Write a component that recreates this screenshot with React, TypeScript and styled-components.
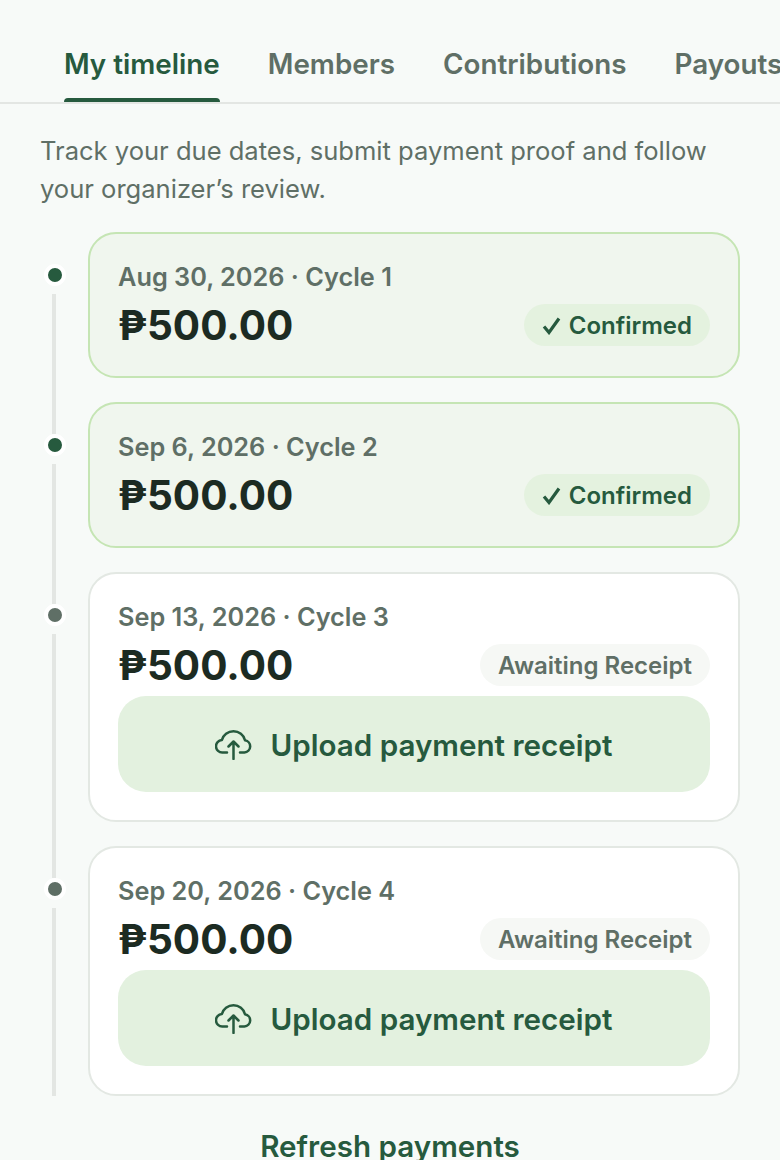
import React from "react";
import styled, { createGlobalStyle } from "styled-components";

const Global = createGlobalStyle`
  html, body { margin: 0; padding: 0; background: #f7faf8; }
  body { font-family: Inter, "Noto Sans", sans-serif; overflow: hidden; }
  * { box-sizing: border-box; }
`;

const Page = styled.div`
  width: 780px;
  height: 1160px;
  overflow: hidden;
  background: #f7faf8;
`;

const Tabs = styled.nav`
  display: flex;
  gap: 48px;
  height: 104px;
  padding: 0 0 0 64px;
  border-bottom: 2px solid #e3e6e3;
  overflow: hidden;
`;

const Tab = styled.div<{ $active?: boolean }>`
  position: relative;
  flex: none;
  height: 102px;
  padding-top: 44px;
  font-size: 27.8px;
  line-height: 40px;
  font-weight: 600;
  color: ${(p) => (p.$active ? "#265a3e" : "#5f6f66")};
  ${(p) =>
    p.$active &&
    `&::after {
      content: "";
      position: absolute;
      left: 0;
      right: 0;
      bottom: 0;
      height: 4px;
      border-radius: 4px 4px 0 0;
      background: #265a3e;
    }`}
`;

const Body = styled.main`
  padding: 28px 40px 0;
`;

const Intro = styled.p`
  margin: 0 0 24px;
  font-size: 25.55px;
  line-height: 38px;
  color: #5f6f66;
`;

const Row = styled.section`
  display: flex;
  gap: 18px;
  padding-bottom: 24px;
  &:last-of-type {
    padding-bottom: 0;
  }
`;

const Rail = styled.div`
  flex: none;
  width: 30px;
  display: flex;
  flex-direction: column;
  align-items: center;
  padding-top: 32px;
`;

const Dot = styled.span<{ $done?: boolean }>`
  flex: none;
  width: 22px;
  height: 22px;
  border-radius: 50%;
  border: 4px solid #fff;
  background: ${(p) => (p.$done ? "#265a3e" : "#5f6f66")};
`;

const Line = styled.span<{ $last?: boolean }>`
  flex: 1;
  width: 4px;
  margin-top: 8px;
  margin-right: 2px;
  margin-bottom: ${(p) => (p.$last ? "0" : "-56px")};
  background: #e3e6e3;
`;

const Card = styled.article<{ $done?: boolean }>`
  flex: 1;
  min-width: 0;
  padding: 28px;
  border-radius: 28px;
  border: 2px solid ${(p) => (p.$done ? "#c5e5b4" : "#e3e8e3")};
  background: ${(p) => (p.$done ? "#f0f6ee" : "#fff")};
`;

const Meta = styled.div`
  font-size: 25.3px;
  line-height: 30px;
  font-weight: 600;
  color: #5f6f66;
`;

const AmountRow = styled.div`
  display: flex;
  align-items: center;
  justify-content: space-between;
  height: 47px;
  margin-top: 9px;
`;

const Amount = styled.div`
  padding-top: 2px;
  font-size: 40.5px;
  line-height: 47px;
  font-weight: 700;
  color: #1c2b22;
`;

const Badge = styled.span<{ $done?: boolean }>`
  display: inline-flex;
  align-items: center;
  gap: 8px;
  height: 42px;
  padding: 2px 18px 0;
  border-radius: 21px;
  font-size: 24px;
  font-weight: 600;
  color: ${(p) => (p.$done ? "#265a3e" : "#5f6f66")};
  background: ${(p) => (p.$done ? "#e4f2df" : "#f6f8f5")};
`;

const Upload = styled.button`
  display: flex;
  align-items: center;
  justify-content: center;
  gap: 18px;
  width: 100%;
  height: 96px;
  margin-top: 8px;
  padding: 2px 0 0;
  border: 0;
  border-radius: 28px;
  background: #e3f1df;
  color: #265a3e;
  font: 600 29.6px/40px Inter, sans-serif;
`;

const Refresh = styled.button`
  display: block;
  margin: 30px auto 0;
  padding: 0;
  border: 0;
  background: none;
  color: #265a3e;
  font: 600 29.6px/40px Inter, sans-serif;
`;

const Check = () => (
  <svg width="19" height="18" viewBox="0 0 19 18" fill="none" stroke="currentColor" strokeWidth="3.2" strokeLinejoin="miter">
    <path d="M2 9.5 7 15.5 17 1.5" />
  </svg>
);

const Cloud = () => (
  <svg width="37" height="30" viewBox="0 0 37 30" fill="none" stroke="currentColor" strokeWidth="2.5" strokeLinecap="round" strokeLinejoin="round">
    <path d="M12 22.5H7.5a6.2 6.2 0 0 1-.6-12.4C8 5 13 1.3 18.5 1.3c5.5 0 10.3 3.7 11.5 8.9a6.2 6.2 0 0 1-.6 12.3H25" />
    <path d="M18.5 29V11.5M13.5 16.5l5-5 5 5" />
  </svg>
);

const items = [
  { meta: "Aug 30, 2026 · Cycle 1", done: true },
  { meta: "Sep 6, 2026 · Cycle 2", done: true },
  { meta: "Sep 13, 2026 · Cycle 3", done: false },
  { meta: "Sep 20, 2026 · Cycle 4", done: false },
];

export default function App() {
  return (
    <Page>
      <Global />
      <Tabs>
        <Tab $active>My timeline</Tab>
        <Tab>Members</Tab>
        <Tab>Contributions</Tab>
        <Tab>Payouts</Tab>
      </Tabs>
      <Body>
        <Intro>
          Track your due dates, submit payment proof and follow your organizer’s review.
        </Intro>
        {items.map((it, i) => (
          <Row key={it.meta}>
            <Rail>
              <Dot $done={it.done} />
              <Line $last={i === items.length - 1} />
            </Rail>
            <Card $done={it.done}>
              <Meta>{it.meta}</Meta>
              <AmountRow>
                <Amount>₱500.00</Amount>
                {it.done ? (
                  <Badge $done>
                    <Check />
                    Confirmed
                  </Badge>
                ) : (
                  <Badge>Awaiting Receipt</Badge>
                )}
              </AmountRow>
              {!it.done && (
                <Upload>
                  <Cloud />
                  Upload payment receipt
                </Upload>
              )}
            </Card>
          </Row>
        ))}
        <Refresh>Refresh payments</Refresh>
      </Body>
    </Page>
  );
}
